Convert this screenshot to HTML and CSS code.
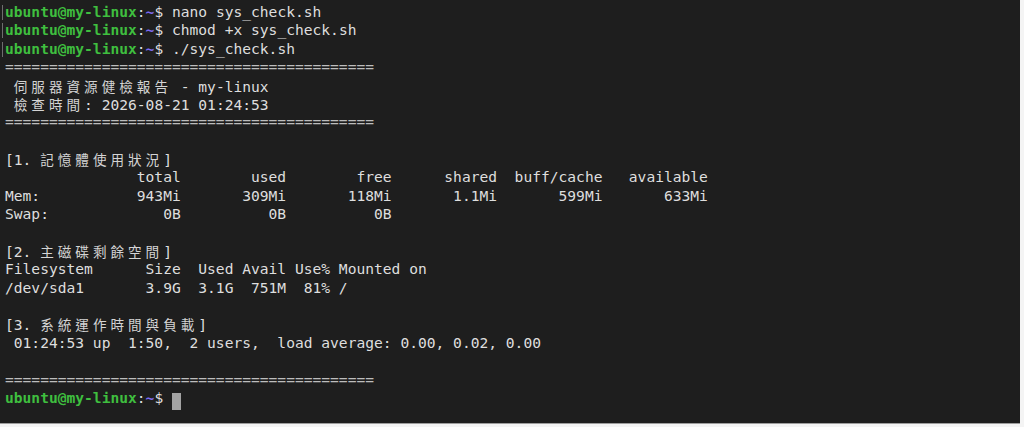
FILE: index.html
```html
<!DOCTYPE html>
<html lang="zh-Hant">
<head>
<meta charset="utf-8">
<title>Terminal</title>
<link rel="stylesheet" href="styles.css">
</head>
<body>
<main class="term">
<div class="line mark"><b class="g">ubuntu@my-linux</b>:<b class="b">~</b>$ nano sys_check.sh</div>
<div class="line mark"><b class="g">ubuntu@my-linux</b>:<b class="b">~</b>$ chmod +x sys_check.sh</div>
<div class="line mark"><b class="g">ubuntu@my-linux</b>:<b class="b">~</b>$ ./sys_check.sh</div>
<div class="line eq">==========================================</div>
<div class="line"> <span class="cjk">伺服器資源健檢報告</span> - my-linux</div>
<div class="line"> <span class="cjk">檢查時間</span>: 2026-08-21 01:24:53</div>
<div class="line eq">==========================================</div>
<div class="line"> </div>
<div class="line">[1. <span class="cjk">記憶體使用狀況</span>]</div>
<div class="line">               total        used        free      shared  buff/cache   available</div>
<div class="line">Mem:           943Mi       309Mi       118Mi       1.1Mi       599Mi       633Mi</div>
<div class="line">Swap:             0B          0B          0B</div>
<div class="line"> </div>
<div class="line">[2. <span class="cjk">主磁碟剩餘空間</span>]</div>
<div class="line">Filesystem      Size  Used Avail Use% Mounted on</div>
<div class="line">/dev/sda1       3.9G  3.1G  751M  81% /</div>
<div class="line"> </div>
<div class="line">[3. <span class="cjk">系統運作時間與負載</span>]</div>
<div class="line"> 01:24:53 up  1:50,  2 users,  load average: 0.00, 0.02, 0.00</div>
<div class="line"> </div>
<div class="line eq">==========================================</div>
<div class="line"><b class="g">ubuntu@my-linux</b>:<b class="b">~</b>$ <span class="cursor"> </span></div>
</main>
</body>
</html>
```

FILE: styles.css
```css
html, body {
  margin: 0;
  padding: 0;
}
body {
  background: #f4f4f4;
  width: 1024px;
  height: 427px;
  overflow: hidden;
}
.term {
  box-sizing: border-box;
  width: 1020px;
  height: 424px;
  background: #1e1e1e;
  border-bottom: 1px solid #9e9e9e;
  padding-top: 3px;
  font-family: "DejaVu Sans Mono", "Noto Sans CJK TC", monospace;
  font-size: 14.6px;
  line-height: 18.38px;
  color: #dedede;
}
.line {
  white-space: pre;
  padding-left: 5px;
  height: 18.38px;
}
.mark {
  background: linear-gradient(#6e6e6e, #6e6e6e) no-repeat 2px 2px / 1px 15px;
}
.g {
  color: #3fbf3f;
  font-weight: bold;
}
.b {
  color: #7d6af0;
  font-weight: bold;
}
.cjk {
  font-family: "Noto Sans CJK TC", sans-serif;
  font-size: 13.6px;
  letter-spacing: 3.98px;
  color: #d4d4d4;
}
.eq {
  color: #bdbdbd;
}
.cursor {
  display: inline-block;
  width: 9px;
  height: 17px;
  vertical-align: -4px;
  background: #a3a3a3;
}
```
